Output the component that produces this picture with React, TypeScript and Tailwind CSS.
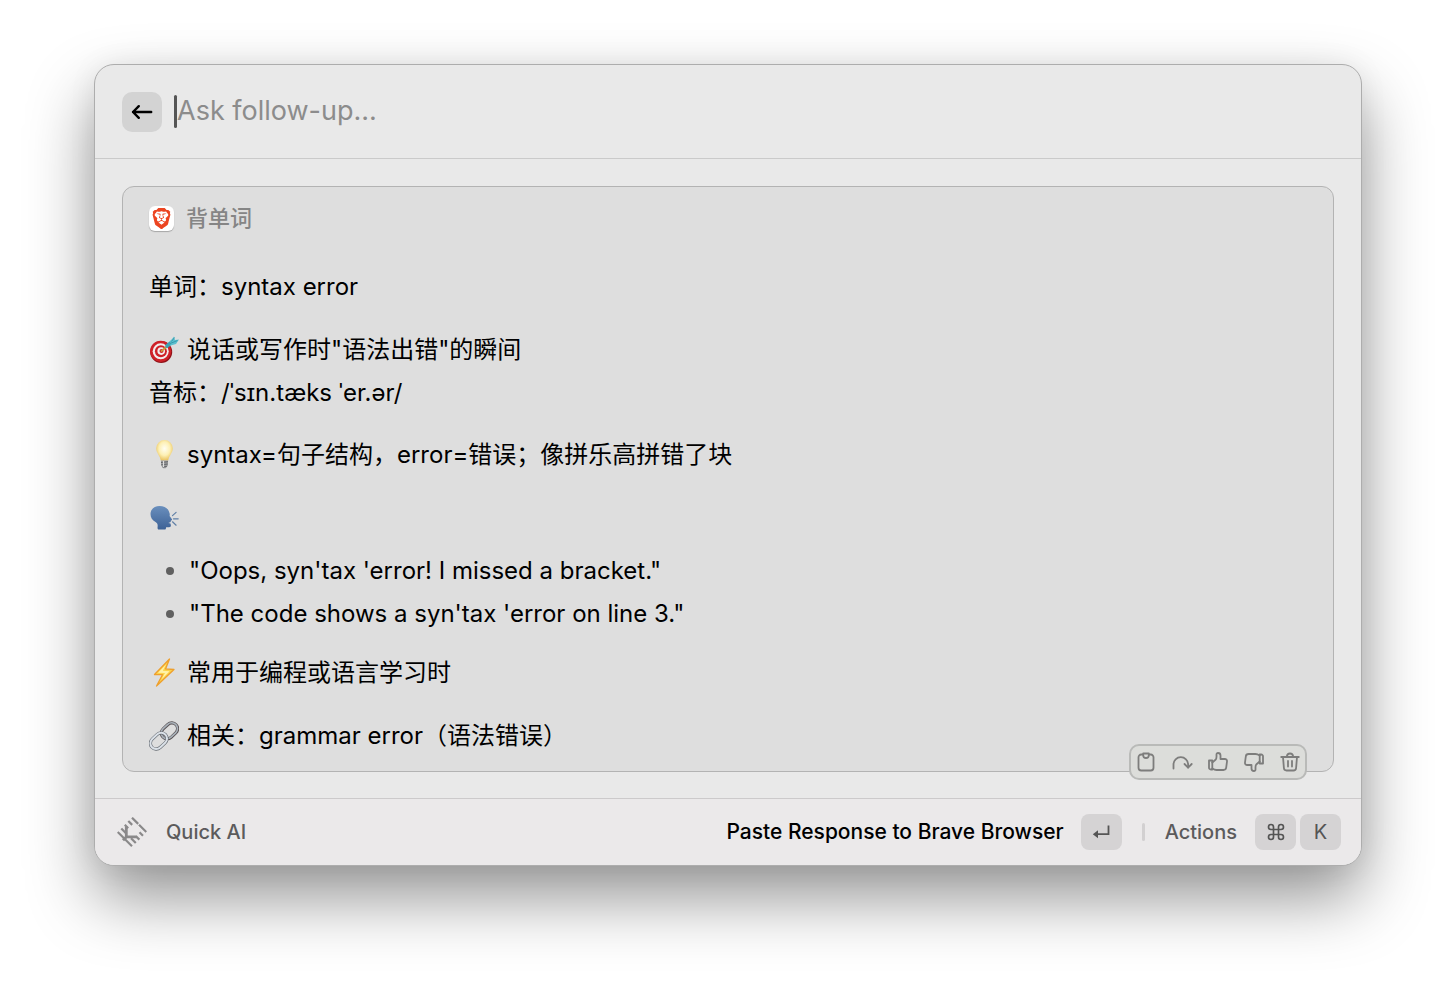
import type { ReactNode } from "react";
import { SiBrave } from "react-icons/si";

function TargetEmoji() {
  return (
    <svg viewBox="0 0 30 30" className="h-[30px] w-[30px]" role="img" aria-label="target">
      <circle cx="12.2" cy="17" r="11" fill="#8f1218" />
      <circle cx="11.7" cy="16.3" r="10.6" fill="#cf2128" />
      <circle cx="11.7" cy="16.3" r="8" fill="#f3eeee" />
      <circle cx="11.9" cy="16.3" r="6" fill="#cf2128" />
      <circle cx="12.2" cy="16.1" r="3.8" fill="#f3eeee" />
      <circle cx="12.5" cy="16" r="2" fill="#cf2128" />
      <path d="M12.500 16 18.500 11" stroke="#c79a3c" strokeWidth="1.8" strokeLinecap="round" />
      <path d="M18 11 23.500 6.500" stroke="#3fa3b5" strokeWidth="3.600" strokeLinecap="round" />
      <path d="M21 6.500 25 1.500 26 5 30 4.500 27 9 21.500 10.500Z" fill="#5cc0cf" />
      <path d="M21 8.500 28.500 5.500M22.500 6.500 25.500 2.500" stroke="#2f8fa3" strokeWidth="0.800" />
    </svg>
  );
}

function BulbEmoji() {
  return (
    <svg viewBox="0 0 30 30" className="h-[30px] w-[30px]" role="img" aria-label="light bulb">
      <defs>
        <radialGradient id="bulb" cx="50%" cy="42%" r="60%">
          <stop offset="0" stopColor="#fffef2" />
          <stop offset="0.55" stopColor="#fdf0b4" />
          <stop offset="1" stopColor="#e8bf57" />
        </radialGradient>
      </defs>
      <path d="M15.500 0a8.300 8.300 0 0 0-8.300 8.300c0 4.700 3.700 7.200 4.600 12.200h7.400c.9-5 4.600-7.500 4.600-12.200A8.300 8.300 0 0 0 15.500 0Z" fill="url(#bulb)" />
      <path d="M11.900 20.500h7.200l-.4 5.200-2 2.600h-2.400l-2-2.600Z" fill="#9b9b9b" />
      <path d="M12 22.500 19 21.700M12.200 24.800l6.600-.8M13.500 27l4.300-.6" stroke="#63666a" strokeWidth="1" />
      <path d="M14.500 21v6" stroke="#dedede" strokeWidth="1.200" />
    </svg>
  );
}

function SpeakingEmoji() {
  return (
    <svg viewBox="0 0 30 30" className="h-[30px] w-[30px]" role="img" aria-label="speaking head">
      <defs>
        <linearGradient id="head" x1="0" y1="0" x2="0" y2="1">
          <stop offset="0" stopColor="#6a8fbd" />
          <stop offset="1" stopColor="#3d6296" />
        </linearGradient>
      </defs>
      <path
        d="M10.500 3C5.500 3 1.500 6.300 1.500 10.900c0 3.800 1.800 6.200 5 8 1.800 1 2.400 2.600 2.100 4.900-.2 1.600.1 2.700 1.100 2.700h6c1 0 1.300-.7 1.400-2.300h3c1.600 0 2-.9 1.700-2.200l-.3-1.500-2.200-.6 2.400-1 .1-1.200c1.200-.2 1.500-.8 1-1.600l-2.200-3.100c.3-1.200.2-2.500-.3-3.600C18.800 4.800 15.300 3 10.500 3Z"
        fill="url(#head)"
      />
      <path d="m23.500 12.600 3.600-3.200M24.500 15.800h4.700M23.500 18.800l3.600 3.400" stroke="#5f7fa6" strokeWidth="1.200" strokeLinecap="round" />
    </svg>
  );
}

function BoltEmoji() {
  return (
    <svg viewBox="0 0 30 30" className="h-[30px] w-[30px]" role="img" aria-label="high voltage">
      <path d="M20.500 1 5.500 16.500l8 .2L7.500 28 25 11.500l-8.500-.6Z" fill="#fcd34a" stroke="#ee9f2d" strokeWidth="1.300" strokeLinejoin="round" />
      <path d="M17 6.500 9 14.800l7 .2-3.500 6.500 8-8.300-6.700-.5Z" fill="#fff2a8" />
    </svg>
  );
}

function LinkEmoji() {
  return (
    <svg viewBox="0 0 30 30" className="h-[30px] w-[30px]" role="img" aria-label="link">
      <g fill="none" transform="rotate(-43 15 15)">
        <rect x="13.500" y="9.200" width="18" height="11.600" rx="5.800" stroke="#5a5356" strokeWidth="3.200" />
        <rect x="13.500" y="9" width="18" height="11.600" rx="5.800" stroke="#aab3bb" strokeWidth="1.600" />
        <rect x="-1.500" y="9.200" width="18.500" height="11.600" rx="5.800" stroke="#666c73" strokeWidth="3.200" />
        <rect x="-1.500" y="9.200" width="18.500" height="11.600" rx="5.800" stroke="#dbe1e8" strokeWidth="2" />
      </g>
    </svg>
  );
}

function AppLogo() {
  return (
    <svg viewBox="0 0 30 30" className="h-[30px] w-[30px]" fill="none" stroke="#8a898a" strokeWidth="2.200" aria-hidden="true">
      <path d="M.7 15 15 29.200" />
      <path d="M4.300 11.400 9 16.200" />
      <path d="M14 21.200 18.800 26" />
      <path d="M7.800 7.800 11.200 11.200" />
      <path d="M19 19.200 22.400 22.600" />
      <path d="M11.300 4 15.200 7.900" />
      <path d="M22.500 15.200 26 18.700" />
      <path d="M15 .7 21.200 6.900M22 7.700 29.300 15" />
      <path d="M9.300 9.300v10.600h10.600" strokeWidth="2.800" />
      <path d="M9.800 19.400 6 23.200" strokeWidth="2.800" />
    </svg>
  );
}

const toolbar: { label: string; icon: ReactNode }[] = [
  {
    label: "Copy",
    icon: (
      <>
        <path d="M7 2.500H5.200A2.700 2.700 0 0 0 2.500 5.200v10.600a2.700 2.700 0 0 0 2.700 2.700h9.600a2.700 2.700 0 0 0 2.700-2.700V5.200a2.700 2.700 0 0 0-2.700-2.700H13" />
        <path d="M7.200 1.500h5.600v1.700a2.800 2.800 0 0 1-5.600 0Z" />
      </>
    ),
  },
  {
    label: "Retry",
    icon: (
      <>
        <path d="M1.500 16.500v-4a7.300 7.300 0 0 1 14.600 0v3" />
        <path d="m12.500 12 3.600 3.600 3.600-3.600" />
      </>
    ),
  },
  {
    label: "Like",
    icon: (
      <>
        <path d="M1 8.500h3.300v9H2.800A1.800 1.800 0 0 1 1 15.700Z" />
        <path d="M4.300 10.500 7.500 7.800c.9-.8 1-1.800 1-3V2.500c0-1 .6-1.500 1.500-1.500 1.600 0 2.500 1 2.500 2.500V7h4.200c1.500 0 2.500 1 2.300 2.500l-.8 6a2.800 2.800 0 0 1-2.800 2.500H8.500c-1.800 0-2.700-.5-4.200-1.500" />
      </>
    ),
  },
  {
    label: "Dislike",
    icon: (
      <g transform="rotate(180 10 10)">
        <path d="M1 8.500h3.300v9H2.800A1.800 1.800 0 0 1 1 15.700Z" />
        <path d="M4.300 10.500 7.500 7.800c.9-.8 1-1.800 1-3V2.500c0-1 .6-1.500 1.500-1.500 1.600 0 2.500 1 2.500 2.500V7h4.200c1.500 0 2.500 1 2.300 2.500l-.8 6a2.800 2.800 0 0 1-2.800 2.500H8.500c-1.800 0-2.700-.5-4.200-1.500" />
      </g>
    ),
  },
  {
    label: "Delete",
    icon: (
      <>
        <path d="M1.200 5h17.600M6.800 4.800C7 2.800 8 1.500 10 1.500s3 1.300 3.200 3.300" />
        <path d="m3 5 .9 11c.1 1.600 1 2.500 2.600 2.500h7c1.600 0 2.500-.9 2.600-2.500L17 5M8 9v5.500M12 9v5.500" />
      </>
    ),
  },
];

function Key({ children }: { children: ReactNode }) {
  return (
    <kbd className="flex h-9 w-[41px] items-center justify-center rounded-lg bg-[#d5d3d4] font-[Inter,sans-serif] text-[20px] font-normal text-[#555]">
      {children}
    </kbd>
  );
}

export default function App() {
  return (
    <main className="min-h-screen bg-white px-[94px] pt-16 pb-[124px] font-[Inter,'Noto_Sans_CJK_SC',sans-serif]">
      <div className="flex flex-col overflow-hidden rounded-[20px] border border-[#adadad] bg-[#e9e9e9] shadow-[0_32px_66px_rgba(0,0,0,0.42),0_0_30px_rgba(0,0,0,0.06)]">
        {/* Search bar */}
        <header className="flex h-[94px] items-center border-b border-[#cacaca] px-[27px]">
          <button aria-label="Back" className="flex h-10 w-10 items-center justify-center rounded-[10px] bg-[#d3d3d3] text-black">
            <svg viewBox="0 0 24 24" className="h-6 w-6" fill="none" stroke="currentColor" strokeWidth="2.400" strokeLinecap="round" strokeLinejoin="round">
              <path d="M21.200 12H3M8.800 6.200 3 12l5.800 5.800" />
            </svg>
          </button>
          <span className="ml-3 h-[33px] w-[3px] rounded-full bg-[#555]" />
          <input
            aria-label="Ask follow-up"
            placeholder="Ask follow-up..."
            className="h-10 min-w-0 flex-1 bg-transparent text-[27px] text-black outline-none placeholder:text-[#8c8c8c]"
          />
        </header>

        {/* Answer */}
        <section className="px-[27px] pt-[27px] pb-[26px]">
          <article className="relative rounded-xl border border-[#b3b3b3] bg-[#dedede] px-[26px] pt-[11px] pb-[14px] text-[24px] leading-[43px] text-black">
            <h1 className="flex h-10 items-center gap-3 text-[22px] font-medium text-[#858585]">
              <span className="flex h-[25px] w-[25px] items-center justify-center rounded-md bg-white shadow-[0_1px_1px_rgba(0,0,0,0.25)]">
                <SiBrave className="h-[21px] w-[21px] text-[#ec4420]" />
              </span>
              背单词
            </h1>

            <div className="mt-[27px]">
              <p>单词：syntax error</p>
              <div className="mt-5">
                <p className="flex items-center gap-2">
                  <TargetEmoji /> 说话或写作时"语法出错"的瞬间
                </p>
                <p>音标：/ˈsɪn.tæks ˈer.ər/</p>
              </div>
              <p className="mt-[19px] flex items-center gap-2">
                <BulbEmoji /> syntax=句子结构，error=错误；像拼乐高拼错了块
              </p>
              <p className="mt-5 flex h-[43px] items-center">
                <SpeakingEmoji />
              </p>
              <ul className="mt-[10px]">
                {['"Oops, syn\'tax \'error! I missed a bracket."', '"The code shows a syn\'tax \'error on line 3."'].map((line) => (
                  <li key={line} className="flex items-center gap-[15px] pl-[17px]">
                    <span className="h-2 w-2 rounded-full bg-[#606060]" />
                    {line}
                  </li>
                ))}
              </ul>
              <p className="mt-4 flex items-center gap-2">
                <BoltEmoji /> 常用于编程或语言学习时
              </p>
              <p className="mt-5 flex items-center gap-2">
                <LinkEmoji /> 相关：grammar error（语法错误）
              </p>
            </div>

            <div className="absolute right-[26px] -bottom-[9px] flex h-9 items-center gap-4 rounded-[10px] border-2 border-[#b9bab8] bg-[#dcddda] px-[5px]">
              {toolbar.map((item) => (
                <button key={item.label} aria-label={item.label} className="text-[#7d7d7c]">
                  <svg viewBox="0 0 20 20" className="h-5 w-5 overflow-visible" fill="none" stroke="currentColor" strokeWidth="1.800" strokeLinecap="round" strokeLinejoin="round">
                    {item.icon}
                  </svg>
                </button>
              ))}
            </div>
          </article>
        </section>

        {/* Action bar */}
        <footer className="flex h-[67px] items-center border-t border-[#cccacb] bg-[#ebe9ea] pr-5 pl-[22px] text-[20px] font-medium text-[#5c5b5c]">
          <AppLogo />
          <span className="ml-[19px] flex-1">Quick AI</span>
          <button className="flex items-center gap-[17px] text-[21px] text-black">
            Paste Response to Brave Browser
            <Key>
              <svg viewBox="0 0 20 20" className="h-5 w-5" fill="none" stroke="currentColor" strokeWidth="1.800">
                <path d="M17.500 3.500v8.700H5" />
                <path d="M7 8.200v8L1.800 12.200Z" fill="currentColor" stroke="none" />
              </svg>
            </Key>
          </button>
          <span className="mx-5 h-[18px] w-[3px] rounded-full bg-[#d2d0d1]" />
          <button className="flex items-center">
            <span className="mr-[18px]">Actions</span>
            <span className="flex gap-1">
              <Key>
                <svg viewBox="0 0 24 24" className="h-5 w-5" fill="none" stroke="currentColor" strokeWidth="2">
                  <path d="M15 6v12a3 3 0 1 0 3-3H6a3 3 0 1 0 3 3V6a3 3 0 1 0-3 3h12a3 3 0 1 0-3-3" />
                </svg>
              </Key>
              <Key>K</Key>
            </span>
          </button>
        </footer>
      </div>
    </main>
  );
}
